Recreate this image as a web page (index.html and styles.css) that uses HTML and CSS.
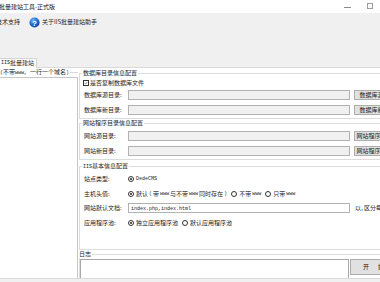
FILE: index.html
```html
<!DOCTYPE html>
<html lang="zh-CN">
<head>
<meta charset="utf-8">
<title>IIS批量建站工具-正式版</title>
<link rel="stylesheet" href="styles.css">
</head>
<body>
<div class="window">
  <header class="titlebar">
    <span class="title">批量建站工具-正式版</span>
    <div class="winctl"><span class="minbtn"></span><span class="maxbtn"></span></div>
  </header>
  <nav class="toolbar">
    <span class="tool tool-first">技术支持</span>
    <span class="tool tool-about">
      <svg class="helpicon" viewBox="0 0 11 11" aria-hidden="true">
        <defs>
          <radialGradient id="hg" cx="38%" cy="30%" r="75%">
            <stop offset="0" stop-color="#6fb2f5"/>
            <stop offset="0.55" stop-color="#1f6fd1"/>
            <stop offset="1" stop-color="#0a3f99"/>
          </radialGradient>
        </defs>
        <circle cx="5.5" cy="5.5" r="5.1" fill="url(#hg)"/>
        <text x="5.5" y="8.6" text-anchor="middle" class="helpq">?</text>
      </svg>关于IIS批量建站助手
    </span>
  </nav>
  <div class="tabstrip"><span class="tab"><span class="lat">IIS</span>批量建站</span></div>
  <main class="page">
    <section class="leftcol">
      <div class="leftlabel"><span><span class="lat">(</span>不带<span class="lat">www, </span>一行一个域名<span class="lat">)</span></span><i class="rule"></i></div>
      <div class="domainbox"></div>
    </section>
    <section class="rightcol">
      <fieldset class="group g1">
        <legend>数据库目录信息配置</legend>
        <div class="cbrow">
          <span class="checkbox"><svg viewBox="0 0 6 6" aria-hidden="true"><path d="M1 3 L2.4 4.5 L5 1.4" fill="none" stroke="#222" stroke-width="0.8"/></svg></span>
          <span>是否复制数据库文件</span>
        </div>
        <div class="rows">
          <div class="row"><span class="lbl">数据库源目录:</span><span class="tb"></span><button class="btn">数据库源目录</button></div>
          <div class="row"><span class="lbl">数据库新目录:</span><span class="tb"></span><button class="btn">数据库新目录</button></div>
        </div>
      </fieldset>
      <fieldset class="group g2">
        <legend>网站程序目录信息配置</legend>
        <div class="rows">
          <div class="row"><span class="lbl">网站源目录:</span><span class="tb"></span><button class="btn">网站程序源目录</button></div>
          <div class="row"><span class="lbl">网站新目录:</span><span class="tb"></span><button class="btn">网站程序新目录</button></div>
        </div>
      </fieldset>
      <fieldset class="group g3">
        <legend><span class="lat">IIS</span>基本信息配置</legend>
        <div class="rows3">
          <div class="row3"><span class="lbl">站点类型:</span>
            <span class="opts"><span class="opt"><span class="radio on"></span><span class="lat">DedeCMS</span></span></span>
          </div>
          <div class="row3"><span class="lbl">主机头值:</span>
            <span class="opts">
              <span class="opt"><span class="radio on"></span>默认<span class="lat">(</span>带<span class="lat">www</span>与不带<span class="lat">www</span>同时存在<span class="lat">)</span></span>
              <span class="opt"><span class="radio"></span>不带<span class="lat">www</span></span>
              <span class="opt"><span class="radio"></span>只带<span class="lat">www</span></span>
            </span>
          </div>
          <div class="row3 rowdoc"><span class="lbl">网站默认文档:</span>
            <span class="tb tbw"><span class="lat">index.php,index.html</span></span>
            <span class="hint">以<span class="lat">,</span>区分每个文档</span>
          </div>
          <div class="row3"><span class="lbl">应用程序池:</span>
            <span class="opts">
              <span class="opt"><span class="radio on"></span>独立应用程序池</span>
              <span class="opt"><span class="radio"></span>默认应用程序池</span>
            </span>
          </div>
        </div>
      </fieldset>
      <fieldset class="group g4">
        <legend>日志</legend>
        <div class="logrow">
          <div class="logbox"></div>
          <button class="btn startbtn">开始</button>
        </div>
      </fieldset>
    </section>
  </main>
</div>
</body>
</html>
```

FILE: styles.css
```css
* { box-sizing: border-box; }
html, body { margin: 0; padding: 0; }
body {
  width: 380px;
  height: 282px;
  overflow: hidden;
  background: #f0f0f0;
  font-family: "Noto Sans CJK SC", "Noto Sans", sans-serif;
  font-size: 6px;
  line-height: 8px;
  color: #1e1e1e;
}
.lat {
  font-family: "Liberation Mono", monospace;
  font-size: 5px;
}
.window {
  width: 380px;
  height: 282px;
  display: flex;
  flex-direction: column;
}

/* title bar */
.titlebar {
  flex: none;
  height: 13px;
  background: #fff;
  display: flex;
  align-items: center;
}
.title { margin-left: -1px; white-space: nowrap; color: #111; }
.winctl {
  margin-left: auto;
  display: flex;
  align-items: center;
  gap: 16px;
  padding-right: 7px;
}
.minbtn { width: 7px; height: 1px; background: #8c8c8c; margin-top: 1px; }
.maxbtn { width: 6px; height: 6px; border: 1px solid #9c9c9c; margin-top: -2px; }

/* toolbar */
.toolbar {
  flex: none;
  height: 44px;
  padding-top: 2px;
  display: flex;
  align-items: flex-start;
  background: #f0f0f0;
}
.tool { display: flex; align-items: center; height: 14px; white-space: nowrap; }
.tool-first { margin-left: -4px; }
.tool-about { margin-left: 9px; gap: 2px; }
.helpicon { width: 11px; height: 11px; display: block; }
.helpq { font-family: "Liberation Sans", sans-serif; font-size: 8px; font-weight: bold; fill: #fff; }

/* tabs */
.tabstrip {
  flex: none;
  height: 10px;
  display: flex;
  align-items: flex-end;
  background: #f0f0f0;
}
.tab {
  position: relative;
  z-index: 1;
  height: 10px;
  margin-bottom: -1px;
  margin-left: -3px;
  padding: 0 2px 1px 3px;
  background: #fff;
  border: 1px solid #d4d4d4;
  border-bottom: 0;
  display: flex;
  align-items: center;
  white-space: nowrap;
}

/* page */
.page {
  flex: none;
  width: 410px;
  height: 212px;
  background: #fff;
  border-top: 1px solid #dadada;
  border-bottom: 1px solid #dadada;
  display: grid;
  grid-template-columns: 78px 331px;
  column-gap: 1px;
  overflow: hidden;
}
.leftcol { display: flex; flex-direction: column; min-height: 0; }
.leftlabel { flex: none; height: 9px; display: flex; align-items: center; white-space: nowrap; }
.leftlabel .rule { flex: 1; height: 1px; background: #dcdcdc; margin-left: 1px; }
.domainbox {
  flex: 1;
  background: #fff;
  border-top: 1px solid #c6c6c6;
  border-right: 1px solid #c6c6c6;
}

.rightcol { display: flex; flex-direction: column; padding-top: 1px; min-height: 0; }
.group {
  margin: 0;
  padding: 0 0 2px 4px;
  border: 1px solid #dcdcdc;
  min-width: 0;
  flex: none;
}
.group legend {
  margin-left: -2px;
  padding: 0 1px;
  height: 8px;
  line-height: 8px;
  white-space: nowrap;
}

.cbrow { height: 12px; display: flex; align-items: center; gap: 1px; margin-left: -1px; white-space: nowrap; }
.checkbox {
  width: 6px; height: 6px;
  border: 1px solid #333;
  background: #fff;
  display: block;
}
.checkbox svg { display: block; width: 4px; height: 4px; }

.rows { display: grid; row-gap: 3px; }
.g2 .rows { margin-top: 3px; }
.row {
  height: 12px;
  display: grid;
  grid-template-columns: 40px 222px 47px;
  column-gap: 4px;
  align-items: center;
}
.lbl { white-space: nowrap; }
.tb {
  display: block;
  height: 10px;
  border: 1px solid #b2b2b2;
  background: #f0f0f0;
}
.btn {
  height: 10px;
  margin: 0;
  padding: 0;
  font: inherit;
  line-height: 8px;
  color: #1e1e1e;
  background: #e1e1e1;
  border: 1px solid #adadad;
  white-space: nowrap;
  overflow: hidden;
  text-align: center;
}

.g2 { margin-top: 0; }
.g3 { margin-top: 2px; padding-bottom: 19px; }
.rows3 { margin-top: 2px; display: grid; grid-auto-rows: 14.5px; }
.row3 {
  display: grid;
  grid-template-columns: 40px 222px auto;
  column-gap: 4px;
  align-items: center;
}
.opts { grid-column: 2 / 4; display: flex; align-items: center; gap: 4px; white-space: nowrap; }
.opt { display: flex; align-items: center; gap: 1px; }
.radio {
  width: 6px; height: 6px;
  border: 1px solid #333;
  border-radius: 50%;
  background: #fff;
  display: flex;
  align-items: center;
  justify-content: center;
  margin-right: 1px;
}
.radio.on::after {
  content: "";
  width: 2px; height: 2px;
  border-radius: 50%;
  background: #222;
}
.tbw {
  background: #fff;
  padding-left: 2px;
  line-height: 8px;
  white-space: nowrap;
  overflow: hidden;
}
.hint { white-space: nowrap; margin-left: 1px; }

.g4 { padding: 0; }
.logrow {
  margin-top: 1px;
  display: grid;
  grid-template-columns: 269px 47px;
  column-gap: 1px;
  align-items: start;
}
.logbox { height: 40px; border: 1px solid #a8a8a8; background: #fff; }
.startbtn {
  height: 16px;
  text-align: left;
  padding-left: 12px;
  letter-spacing: 9px;
}
```
